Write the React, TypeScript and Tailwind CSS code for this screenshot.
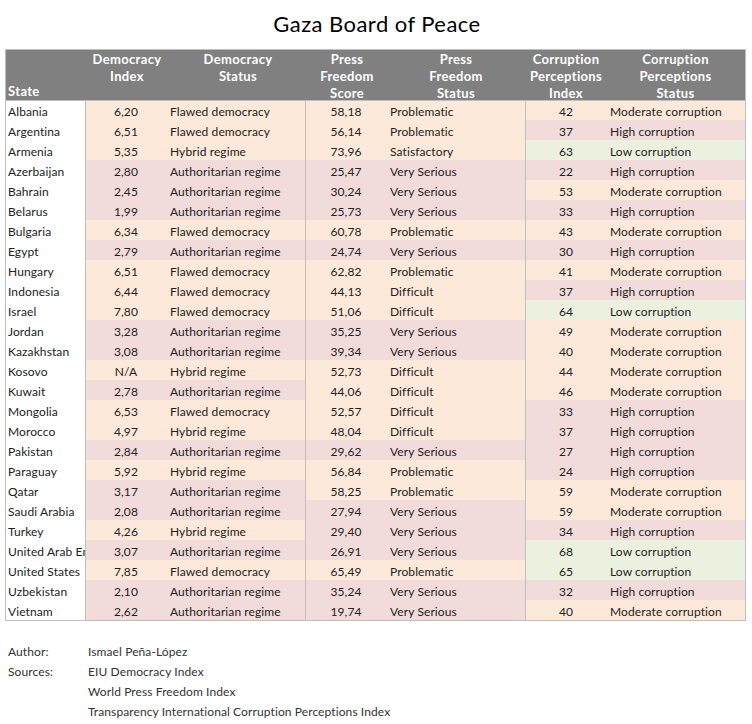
const rows: [string,string,string,string,string,string,string][] = [
["Albania","6,20","Flawed democracy","58,18","Problematic","42","Moderate corruption"],
["Argentina","6,51","Flawed democracy","56,14","Problematic","37","High corruption"],
["Armenia","5,35","Hybrid regime","73,96","Satisfactory","63","Low corruption"],
["Azerbaijan","2,80","Authoritarian regime","25,47","Very Serious","22","High corruption"],
["Bahrain","2,45","Authoritarian regime","30,24","Very Serious","53","Moderate corruption"],
["Belarus","1,99","Authoritarian regime","25,73","Very Serious","33","High corruption"],
["Bulgaria","6,34","Flawed democracy","60,78","Problematic","43","Moderate corruption"],
["Egypt","2,79","Authoritarian regime","24,74","Very Serious","30","High corruption"],
["Hungary","6,51","Flawed democracy","62,82","Problematic","41","Moderate corruption"],
["Indonesia","6,44","Flawed democracy","44,13","Difficult","37","High corruption"],
["Israel","7,80","Flawed democracy","51,06","Difficult","64","Low corruption"],
["Jordan","3,28","Authoritarian regime","35,25","Very Serious","49","Moderate corruption"],
["Kazakhstan","3,08","Authoritarian regime","39,34","Very Serious","40","Moderate corruption"],
["Kosovo","N/A","Hybrid regime","52,73","Difficult","44","Moderate corruption"],
["Kuwait","2,78","Authoritarian regime","44,06","Difficult","46","Moderate corruption"],
["Mongolia","6,53","Flawed democracy","52,57","Difficult","33","High corruption"],
["Morocco","4,97","Hybrid regime","48,04","Difficult","37","High corruption"],
["Pakistan","2,84","Authoritarian regime","29,62","Very Serious","27","High corruption"],
["Paraguay","5,92","Hybrid regime","56,84","Problematic","24","High corruption"],
["Qatar","3,17","Authoritarian regime","58,25","Problematic","59","Moderate corruption"],
["Saudi Arabia","2,08","Authoritarian regime","27,94","Very Serious","59","Moderate corruption"],
["Turkey","4,26","Hybrid regime","29,40","Very Serious","34","High corruption"],
["United Arab Emirates","3,07","Authoritarian regime","26,91","Very Serious","68","Low corruption"],
["United States","7,85","Flawed democracy","65,49","Problematic","65","Low corruption"],
["Uzbekistan","2,10","Authoritarian regime","35,24","Very Serious","32","High corruption"],
["Vietnam","2,62","Authoritarian regime","19,74","Very Serious","40","Moderate corruption"],
];
const bg=(s:string)=>/Authoritarian|Very Serious|High/.test(s)?"bg-[#f2dcdb]":/Low/.test(s)?"bg-[#ebf1de]":"bg-[#fde9d9]";
export default function App(){
return <div className="w-[752px] h-[724px] bg-white overflow-hidden text-[12px] text-[#222]" style={{fontFamily:'Lato, "Liberation Sans", sans-serif'}}>
<h1 className="h-[49px] pt-[10px] text-center text-[22px] leading-[28px] text-black tracking-[0.45px] pl-[2px]">Gaza Board of Peace</h1>
<div className="ml-[5px] w-[741px] border border-[#bfbfbf]">
<div className="grid grid-cols-[80px_82px_140px_78px_140px_80px_139px] bg-[#808080] text-white font-bold text-[13px] leading-[17px] h-[51px] pt-[1px] border-b border-[#bfbfbf] text-center tracking-[0.35px]">
<div className="text-left pl-[2px] pb-[2px] self-end">State</div>
<div>Democracy<br/>Index</div><div>Democracy<br/>Status</div><div>Press<br/>Freedom<br/>Score</div><div>Press<br/>Freedom<br/>Status</div><div>Corruption<br/>Perceptions<br/>Index</div><div>Corruption<br/>Perceptions<br/>Status</div>
</div>
{rows.map((r,i)=><div key={r[0]} className={`grid grid-cols-[80px_220px_220px_219px] tracking-[0.1px] ${i===0?"h-[19px] grid-rows-[19px] leading-[22px]":"h-5 grid-rows-[20px] leading-6"}`}>
<div className="pl-[2px] overflow-hidden whitespace-nowrap border-r border-[#bfbfbf]">{r[0]}</div>
<div className={`grid grid-cols-[80px_139px] border-r border-[#bfbfbf] ${bg(r[2])}`}><div className="text-center">{r[1]}</div><div className="pl-[4px] whitespace-nowrap">{r[2]}</div></div>
<div className={`grid grid-cols-[80px_139px] border-r border-[#bfbfbf] ${bg(r[4])}`}><div className="text-center">{r[3]}</div><div className="pl-[4px] whitespace-nowrap">{r[4]}</div></div>
<div className={`grid grid-cols-[80px_139px] ${bg(r[6])}`}><div className="text-center">{r[5]}</div><div className="pl-[4px] whitespace-nowrap">{r[6]}</div></div>
</div>)}
</div>
<div className="mt-[21px] ml-[8px] grid grid-cols-[80px_1fr] leading-5 tracking-[0.1px] text-[#333]">
<div>Author:</div><div>Ismael Peña-López</div>
<div>Sources:</div><div>EIU Democracy Index</div>
<div></div><div>World Press Freedom Index</div>
<div></div><div>Transparency International Corruption Perceptions Index</div>
</div>
</div>}
